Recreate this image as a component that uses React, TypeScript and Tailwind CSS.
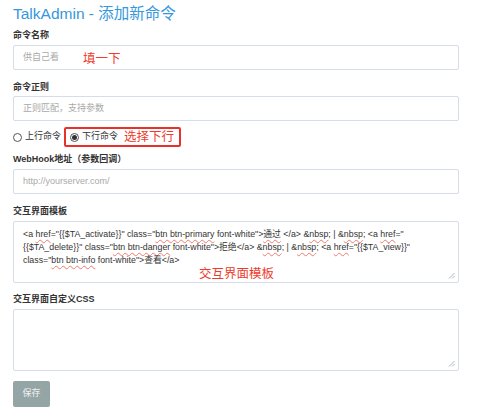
import React from "react";

const font = "font-['Liberation_Sans','Noto_Sans_CJK_SC',sans-serif]";

const W = ({ children }: { children: React.ReactNode }) => (
  <span className="underline decoration-wavy decoration-[#f07a6e] decoration-[0.6px] underline-offset-[1.5px]">
    {children}
  </span>
);

const Grip = () => (
  <svg className="absolute right-[3px] bottom-[3px]" width="7" height="7" viewBox="0 0 7 7">
    <line x1="6.5" y1="1" x2="1" y2="6.5" stroke="#9aa3ad" strokeWidth="0.8" />
    <line x1="6.5" y1="4" x2="4" y2="6.5" stroke="#9aa3ad" strokeWidth="0.8" />
  </svg>
);

const Label = ({ children, className = "" }: { children: React.ReactNode; className?: string }) => (
  <div className={`h-[14px] leading-[14px] text-[9px] font-bold text-[#333] ${className}`}>{children}</div>
);

const Input = ({ placeholder, note }: { placeholder: string; note?: string }) => (
  <div className="h-[25px] w-[446px] border border-[#d5dde8] rounded-[2px] bg-white flex items-center pl-[9px] whitespace-nowrap">
    <span className={`text-[9px] text-[#a9a9a9] shrink-0 ${note ? "w-[60px]" : ""}`}>{placeholder}</span>
    {note && <span className="text-[12.5px] text-[#ee3b2c] mt-[4px]">{note}</span>}
  </div>
);

const Radio = ({ checked }: { checked?: boolean }) => (
  <span className="inline-flex w-[9px] h-[9px] rounded-full border border-[#555] bg-white items-center justify-center">
    {checked && <span className="w-[5px] h-[5px] rounded-full bg-[#333]" />}
  </span>
);

export default function App() {
  return (
    <div className={`w-[478px] h-[413px] bg-white ${font} pl-[13px] overflow-hidden`}>
      <div className="h-[28px] pt-[3px] leading-[22px] text-[15.5px] text-[#3598dc]">TalkAdmin - 添加新命令</div>

      <Label className="mb-[3px]">命令名称</Label>
      <Input placeholder="供自己看" note="填一下" />

      <Label className="mt-[10px] mb-[2px]">命令正则</Label>
      <Input placeholder="正则匹配，支持参数" />

      <div className="mt-[6px] h-[20px] flex items-center text-[9px] text-[#333]">
        <label className="flex items-center gap-[3px]">
          <Radio />
          <span>上行命令</span>
        </label>
        <div className="ml-[3px] h-[20px] w-[117px] border-2 border-[#e8312b] rounded-[2px] flex items-center pl-[4px] gap-[3px]">
          <Radio checked />
          <span>下行命令</span>
          <span className="text-[12.5px] text-[#ee3b2c] ml-[3px]">选择下行</span>
        </div>
      </div>

      <Label className="mt-[5px] mb-[3px]">WebHook地址（参数回调）</Label>
      <Input placeholder="http://yourserver.com/" />

      <Label className="mt-[10px] mb-[3px]">交互界面模板</Label>
      <div className="relative h-[62px] w-[446px] border border-[#d5dde8] rounded-[2px] pl-[9px] pt-[6px] text-[8.8px] leading-[13px] text-[#333] whitespace-nowrap">
        <div>
          &lt;a <W>href</W>="{"{{"}$TA_activate{"}}"}" class="<W>btn btn-primary</W> font-white"&gt;<W>通过</W> &lt;/a&gt; &amp;<W>nbsp</W>; | &amp;<W>nbsp</W>; &lt;a <W>href</W>="
        </div>
        <div>
          {"{{"}$TA_delete{"}}"}" class="<W>btn btn-danger</W> font-white"&gt;拒绝&lt;/a&gt; &amp;<W>nbsp</W>; | &amp;<W>nbsp</W>; &lt;a <W>href</W>="{"{{"}$TA_view{"}}"}"
        </div>
        <div>
          class="<W>btn btn-info</W> font-white"&gt;查看&lt;/a&gt;
        </div>
        <div className="pl-[176px] text-[12.5px] leading-[15px] text-[#ee3b2c]">交互界面模板</div>
        <Grip />
      </div>

      <Label className="mt-[9px] mb-[3px]">交互界面自定义CSS</Label>
      <div className="relative h-[62px] w-[446px] border border-[#d5dde8] rounded-[2px]">
        <Grip />
      </div>

      <button className="mt-[10px] h-[26px] w-[37px] rounded-[2px] bg-[#95a5a6] text-[9px] text-[#eef2f2]">保存</button>
    </div>
  );
}
